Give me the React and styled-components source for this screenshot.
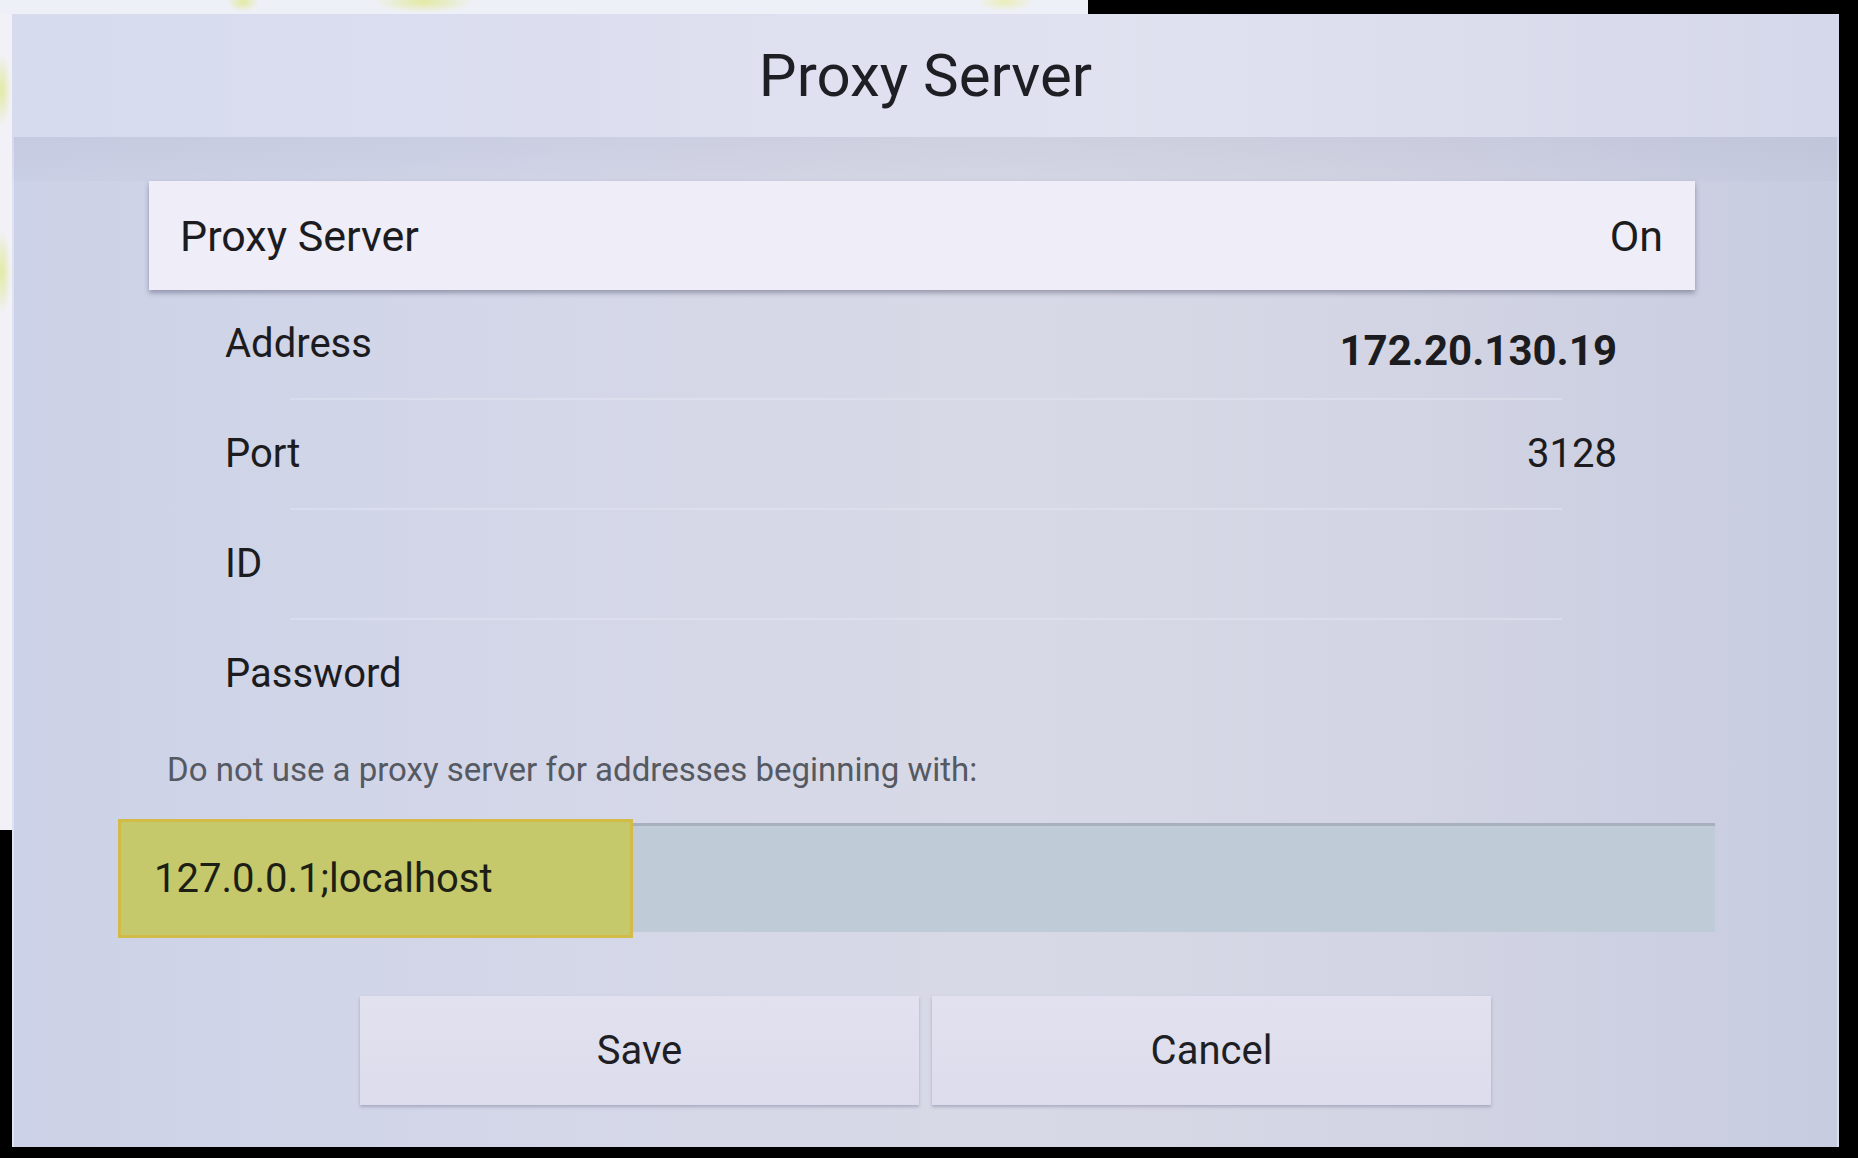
import React from 'react';
import styled, { createGlobalStyle } from 'styled-components';

const fields = [
  { label: 'Address', value: '172.20.130.19', strong: true },
  { label: 'Port', value: '3128' },
  { label: 'ID', value: '' },
  { label: 'Password', value: '' },
];

const App = () => (
  <>
    <GlobalStyle />
    <Page>
      <Dialog>
        <Header>Proxy Server</Header>
        <Body>
          <FocusRow>
            <span>Proxy Server</span>
            <span>On</span>
          </FocusRow>
          <Fields>
            {fields.map((f, i) => (
              <React.Fragment key={f.label}>
                {i > 0 && <Divider />}
                <FieldRow>
                  <span>{f.label}</span>
                  <FieldValue $strong={f.strong}>{f.value}</FieldValue>
                </FieldRow>
              </React.Fragment>
            ))}
          </Fields>
          <Note>Do not use a proxy server for addresses beginning with:</Note>
          <InputBar>
            <InputFocus>127.0.0.1;localhost</InputFocus>
          </InputBar>
          <Buttons>
            <Button>Save</Button>
            <Button>Cancel</Button>
          </Buttons>
        </Body>
      </Dialog>
    </Page>
  </>
);

export default App;

const GlobalStyle = createGlobalStyle`
  html, body {
    margin: 0;
    padding: 0;
    background: #000;
  }
  body {
    font-family: Roboto, "Liberation Sans", sans-serif;
    color: #1c1c20;
  }
`;

const Page = styled.div`
  width: 1858px;
  height: 1158px;
  box-sizing: border-box;
  padding: 14px 19px 11px 12px;
  background:
    radial-gradient(ellipse 16px 10px at 243px 2px, #e3eaa2 0, rgba(227, 234, 162, 0) 100%) no-repeat,
    radial-gradient(ellipse 50px 11px at 424px 2px, #e3eaa2 0, rgba(227, 234, 162, 0) 100%) no-repeat,
    radial-gradient(ellipse 28px 9px at 1005px 2px, #eaeeb8 0, rgba(234, 238, 184, 0) 100%) no-repeat,
    radial-gradient(ellipse 9px 36px at 2px 90px, #e3eaa2 0, rgba(227, 234, 162, 0) 100%) no-repeat,
    radial-gradient(ellipse 9px 42px at 2px 272px, #e3eaa2 0, rgba(227, 234, 162, 0) 100%) no-repeat,
    linear-gradient(#eef0f7, #eef0f7) 0 0 / 1088px 14px no-repeat,
    linear-gradient(#f1f1f7, #f1f1f7) 0 0 / 12px 830px no-repeat,
    #000;
`;

const Dialog = styled.div`
  height: 1133px;
  display: flex;
  flex-direction: column;
  background: linear-gradient(90deg, #ccd2e7 0%, #d4d7e8 30%, #d8d9e6 55%, #d3d5e4 75%, #c8cce0 100%);
  box-shadow: inset 2px 0 0 #dfe3f1, inset -2px 0 0 #dadcea;
`;

const Header = styled.div`
  height: 123px;
  display: flex;
  align-items: center;
  justify-content: center;
  font-size: 60px;
  color: #1e1f24;
  background: linear-gradient(90deg, #d6dbee 0%, #dfe0f0 45%, #e1e2f0 60%, #d5d8ea 100%);
`;

const Body = styled.div`
  flex: 1;
  display: flex;
  flex-direction: column;
  padding-top: 44px;
  background: linear-gradient(180deg, rgba(150, 154, 185, 0.14) 0, rgba(150, 154, 185, 0.06) 44px, rgba(0, 0, 0, 0) 44px);
`;

const FocusRow = styled.div`
  height: 109px;
  margin: 0 144px 0 137px;
  padding: 0 32px 0 31px;
  display: flex;
  align-items: center;
  justify-content: space-between;
  font-size: 43px;
  background: #eeedf8;
  box-shadow: 0 3px 5px rgba(70, 72, 100, 0.45);
`;

const Fields = styled.div`
  display: flex;
  flex-direction: column;
  margin: 0 222px 0 213px;
`;

const FieldRow = styled.div`
  height: 106px;
  display: flex;
  align-items: center;
  justify-content: space-between;
  font-size: 40px;
`;

const FieldValue = styled.span`
  font-weight: ${p => (p.$strong ? 700 : 400)};
  font-size: ${p => (p.$strong ? '42px' : '40px')};
  padding-top: ${p => (p.$strong ? '14px' : '0')};
`;

const Divider = styled.div`
  height: 2px;
  margin: 2px 55px 0 65px;
  background: rgba(228, 230, 242, 0.5);
`;

const Note = styled.div`
  margin-top: 24px;
  padding-left: 155px;
  font-size: 33px;
  line-height: 40px;
  color: #555962;
`;

const InputBar = styled.div`
  height: 109px;
  margin: 33px 124px 0 106px;
  display: flex;
  background: #bfccd8;
  box-shadow: inset 0 3px 0 #a8afbf;
`;

const InputFocus = styled.div`
  width: 515px;
  margin: -4px 0 -6px 0;
  box-sizing: border-box;
  display: flex;
  align-items: center;
  padding-left: 33px;
  font-size: 40px;
  color: #1d1f14;
  background: #c5c96b;
  border: 3px solid #d3bb47;
`;

const Buttons = styled.div`
  margin-top: 64px;
  display: flex;
  justify-content: center;
  gap: 13px;
`;

const Button = styled.button`
  width: 559px;
  height: 109px;
  border: none;
  font-family: inherit;
  font-size: 40px;
  color: #1e1f24;
  background: linear-gradient(180deg, #e1e1ef, #dcdcec);
  box-shadow: 0 2px 3px rgba(90, 90, 120, 0.35);
`;
